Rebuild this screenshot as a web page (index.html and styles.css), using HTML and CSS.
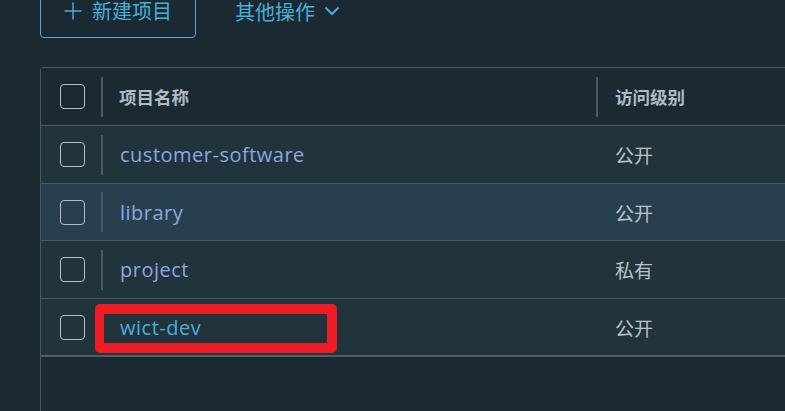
FILE: index.html
```html
<!DOCTYPE html>
<html lang="zh-CN">
<head>
<meta charset="utf-8">
<title>项目</title>
<link rel="stylesheet" href="styles.css">
</head>
<body>
<div class="page">
  <div class="toolbar">
    <button class="btn btn-outline">
      <svg class="icon-plus" width="20" height="20" viewBox="0 0 20 20"><path d="M10 1.5V18.5M1.5 10H18.5" stroke="currentColor" stroke-width="1.4" fill="none"/></svg>
      <span>新建项目</span>
    </button>
    <button class="btn btn-link">
      <span>其他操作</span>
      <svg class="icon-chevron" width="16" height="10" viewBox="0 0 16 10"><path d="M1.5 1.5L8 8L14.5 1.5" stroke="currentColor" stroke-width="2" fill="none"/></svg>
    </button>
  </div>

  <div class="datagrid">
    <div class="row header">
      <div class="cell select"><span class="checkbox"></span></div>
      <div class="cell name"><span class="sep"></span>项目名称</div>
      <div class="cell access"><span class="sep"></span>访问级别</div>
    </div>
    <div class="row">
      <div class="cell select"><span class="checkbox"></span></div>
      <div class="cell name"><span class="sep"></span><a class="link">customer-software</a></div>
      <div class="cell access">公开</div>
    </div>
    <div class="row hover">
      <div class="cell select"><span class="checkbox"></span></div>
      <div class="cell name"><span class="sep"></span><a class="link">library</a></div>
      <div class="cell access">公开</div>
    </div>
    <div class="row">
      <div class="cell select"><span class="checkbox"></span></div>
      <div class="cell name"><span class="sep"></span><a class="link">project</a></div>
      <div class="cell access">私有</div>
    </div>
    <div class="row marked">
      <div class="cell select"><span class="checkbox"></span></div>
      <div class="cell name"><span class="sep"></span><a class="link visited">wict-dev</a></div>
      <div class="cell access">公开</div>
      <span class="highlight"></span>
    </div>
    <div class="grid-body-fill"></div>
  </div>
</div>
</body>
</html>
```

FILE: styles.css
```css
* { box-sizing: border-box; }

html, body {
  margin: 0;
  padding: 0;
  background: #1b2a32;
  overflow: hidden;
  height: 100%;
}

body {
  font-family: "Open Sans", "Noto Sans CJK SC", sans-serif;
  color: #b8c3ca;
}

.page {
  padding-left: 40px;
  width: 900px;
}

.toolbar {
  display: flex;
  align-items: flex-end;
  margin-top: -16px;
  height: 54px;
}

.btn {
  font-family: "Noto Sans CJK SC", sans-serif;
  font-size: 20px;
  background: transparent;
  color: #49afd9;
  display: flex;
  align-items: center;
  cursor: pointer;
  padding: 0;
}

.btn-outline {
  height: 54px;
  width: 156px;
  border: 1px solid #49afd9;
  border-radius: 4px;
  padding-left: 22px;
  gap: 9px;
}

.btn-outline span { line-height: 1; }

.icon-plus { display: block; }

.btn-link {
  height: 54px;
  border: none;
  margin-left: 39px;
  gap: 9px;
}

.icon-chevron { display: block; margin-top: -1px; }

.datagrid {
  margin-top: 29px;
  border: 1px solid #485764;
  border-right: none;
  border-radius: 4px 0 0 0;
  background: #1b2a32;
  display: flex;
  flex-direction: column;
}

.row {
  display: flex;
  align-items: center;
  height: 58px;
  border-bottom: 1px solid #485764;
  background: #21333b;
  position: relative;
}

.row.header {
  background: #1b2a32;
  font-weight: 700;
  color: #adbbc4;
}

.row.hover { background: #28404d; height: 57px; }

.row.marked { border-bottom: 2px solid #4f5e6a; height: 58px; }

.cell {
  display: flex;
  align-items: center;
  height: 100%;
  font-family: "Noto Sans CJK SC", sans-serif;
  font-size: 19px;
}

.row.header .cell { font-size: 17.5px; }

.select {
  width: 60px;
  padding-left: 19px;
}

.name {
  width: 495px;
}

.access {
  flex: 1;
}

.sep {
  width: 2px;
  height: 40px;
  background: #4b5a66;
  margin-right: 17px;
}

.row.header .name .sep { margin-right: 16px; }

.row.header .access .sep { margin-right: 17px; }

.row:not(.header) .access { padding-left: 19px; }

.checkbox {
  width: 25px;
  height: 25px;
  border: 1.5px solid #b5bec5;
  border-radius: 4px;
  display: block;
}

.link {
  font-family: "Open Sans", "Noto Sans CJK SC", sans-serif;
  color: #89a8e2;
  font-size: 20px;
  letter-spacing: 0.5px;
  text-decoration: none;
}

.link.visited { color: #4aafdc; }

.highlight {
  position: absolute;
  left: 54px;
  top: 5px;
  width: 242px;
  height: 49px;
  border: 10px solid #ed1c24;
  border-left-width: 9px;
  border-radius: 5px;
}

.grid-body-fill {
  height: 120px;
}
```
